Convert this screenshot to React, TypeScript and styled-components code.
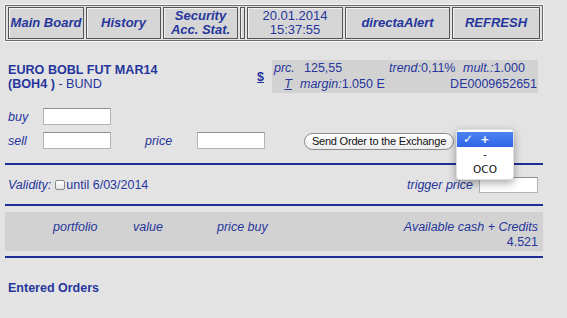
import React from 'react'
import styled, { createGlobalStyle } from 'styled-components'

// Colours taken from the trading screen.
const ink = '#26369c'
const rule = '#1f2e96'
const panel = '#d2d2d2'

const GlobalStyle = createGlobalStyle`
    *, *::before, *::after { box-sizing: border-box; }
    html, body {
        margin: 0;
        background: #e3e3e3;
    }
    body {
        font-family: 'Liberation Sans', Arial, sans-serif;
        font-size: 12.5px;
        color: ${ink};
    }
`

const Page = styled.div`
    width: 538px;
    margin-left: 5px;
    padding-top: 5px;
`

// Top navigation, an old html table with cellspacing.
const NavBar = styled.div`
    display: flex;
    gap: 2px;
    height: 36px;
    padding: 1px 2px;
    border: 1px solid #6a6a6a;
    box-shadow: 0 0 0 1px #f6f6f6;
`

const NavCell = styled.div<{ $w: number; $plain?: boolean }>`
    width: ${(p) => p.$w}px;
    height: 32px;
    display: flex;
    align-items: center;
    justify-content: center;
    text-align: center;
    background: #d6d6d6;
    border: 1px solid #555;
    box-shadow: inset 1px 1px 0 #f2f2f2;
    font-size: 13px;
    line-height: 14px;
    font-weight: ${(p) => (p.$plain ? 'normal' : 'bold')};
    font-style: ${(p) => (p.$plain ? 'normal' : 'italic')};
`

// Instrument header.
const Instrument = styled.div`
    display: flex;
    align-items: center;
    margin-top: 19px;
`

const Title = styled.div`
    flex: 1;
    align-self: flex-start;
    padding: 3px 0 0 3px;
    font-size: 12.6px;
    line-height: 14px;
    font-weight: bold;
`

const Plain = styled.span`
    font-weight: normal;
`

const Dollar = styled.a`
    font-weight: bold;
    text-decoration: underline;
    color: ${ink};
    margin-right: 8px;
`

const InfoBox = styled.div`
    width: 266px;
    height: 33px;
    margin-right: 5px;
    padding: 1px 0;
    background: ${panel};
    display: grid;
    grid-template-columns: 28px 88px 73px 77px;
    grid-auto-rows: 15px;
    row-gap: 1px;
    align-items: center;
    line-height: 15px;
    white-space: nowrap;
`

const Info = styled.div<{ $pad?: number; $right?: boolean; $span?: number }>`
    padding-left: ${(p) => p.$pad ?? 0}px;
    padding-right: ${(p) => (p.$right ? 1 : 0)}px;
    text-align: ${(p) => (p.$right ? 'right' : 'left')};
    grid-column: ${(p) => (p.$span ? `span ${p.$span}` : 'auto')};
`

const Em = styled.i``

const TLink = styled.i`
    text-decoration: underline;
    padding-right: 7px;
`

// Order form.
const Form = styled.div`
    margin-top: 15px;
    display: flex;
    flex-direction: column;
    gap: 7px;
`

const FormRow = styled.div`
    display: flex;
    align-items: center;
    height: 17px;
`

const Label = styled.i<{ $w: number; $indent?: number; $gap?: number }>`
    width: ${(p) => p.$w}px;
    padding-left: ${(p) => p.$indent ?? 0}px;
    margin-left: ${(p) => p.$gap ?? 0}px;
`

const TextBox = styled.div<{ $w?: number; $h?: number }>`
    width: ${(p) => p.$w ?? 68}px;
    height: ${(p) => p.$h ?? 17}px;
    background: #fff;
    border: 1px solid #b4b4b4;
    border-top-color: #8e8e8e;
`

const SendButton = styled.div`
    margin: 2px 0 0 39px;
    width: 150px;
    height: 17px;
    border: 1px solid #8a8a8a;
    border-radius: 9px;
    background: linear-gradient(#ffffff, #ececec);
    color: #111;
    font-size: 11px;
    letter-spacing: -0.2px;
    line-height: 15px;
    text-align: center;
`

const SelectWrap = styled.div`
    position: relative;
    margin-left: 2px;
    width: 58px;
    height: 17px;
`

const Popup = styled.div`
    position: absolute;
    left: 0;
    top: -3px;
    width: 58px;
    padding: 2px 0;
    background: #fff;
    border-radius: 4px;
    border: 1px solid rgba(0, 0, 0, 0.12);
    box-shadow: 0 3px 9px rgba(0, 0, 0, 0.35);
    z-index: 2;
`

const Option = styled.div<{ $active?: boolean }>`
    position: relative;
    height: 15px;
    line-height: 15px;
    text-align: center;
    font-family: 'DejaVu Sans', sans-serif;
    font-size: 10.5px;
    color: ${(p) => (p.$active ? '#fff' : '#111')};
    font-weight: ${(p) => (p.$active ? 'bold' : 'normal')};
    background: ${(p) => (p.$active ? 'linear-gradient(#4d84f2, #2d63e6)' : 'transparent')};
`

const Check = styled.span`
    position: absolute;
    left: 6px;
    top: 0;
    font-size: 12px;
`

const Rule = styled.div<{ $top: number }>`
    height: 2px;
    background: ${rule};
    margin-top: ${(p) => p.$top}px;
`

const ValidityRow = styled.div`
    display: flex;
    align-items: center;
    padding: 12px 5px 11px 3px;
    height: 39px;
`

const CheckBox = styled.span`
    display: inline-block;
    width: 10px;
    height: 10px;
    margin: 0 1px 0 4px;
    border: 1px solid #8a8a8a;
    border-radius: 2px;
    background: linear-gradient(#ffffff, #e4e4e4);
`

const Spacer = styled.div`
    flex: 1;
`

const TriggerLabel = styled.i`
    margin-right: 6px;
`

// Portfolio summary.
const Summary = styled.div`
    margin-top: 6px;
    height: 39px;
    padding: 8px 5px 2px 0;
    background: ${panel};
    display: grid;
    grid-template-columns: 48px 80px 84px 1fr auto;
    grid-auto-rows: 14px;
    row-gap: 1px;
    line-height: 14px;
    white-space: nowrap;
`

const Head = styled.i<{ $col: number }>`
    grid-column: ${(p) => p.$col};
    grid-row: 1;
`

const Cash = styled.div`
    grid-column: 5;
    grid-row: 2;
    text-align: right;
`

const Section = styled.div`
    margin-top: 23px;
    padding-left: 3px;
    font-weight: bold;
    line-height: 14px;
`

export default function App() {
    return (
        <Page>
            <GlobalStyle />
            <NavBar>
                <NavCell $w={76}>Main Board</NavCell>
                <NavCell $w={75}>History</NavCell>
                <NavCell $w={75}>
                    Security
                    <br />
                    Acc. Stat.
                </NavCell>
                <NavCell $w={5} />
                <NavCell $w={96} $plain>
                    20.01.2014
                    <br />
                    15:37:55
                </NavCell>
                <NavCell $w={105}>directaAlert</NavCell>
                <NavCell $w={88}>REFRESH</NavCell>
            </NavBar>

            <Instrument>
                <Title>
                    EURO BOBL FUT MAR14
                    <br />
                    (BOH4 ) <Plain>- BUND</Plain>
                </Title>
                <Dollar>$</Dollar>
                <InfoBox>
                    <Info $pad={2}>
                        <Em>prc.</Em>
                    </Info>
                    <Info $pad={4}>125,55</Info>
                    <Info $pad={1}>
                        <Em>trend:</Em>0,11%
                    </Info>
                    <Info $pad={2}>
                        <Em>mult.:</Em>1.000
                    </Info>
                    <Info $right>
                        <TLink>T</TLink>
                    </Info>
                    <Info>
                        <Em>margin:</Em>1.050 E
                    </Info>
                    <Info $span={2} $right>
                        DE0009652651
                    </Info>
                </InfoBox>
            </Instrument>

            <Form>
                <FormRow>
                    <Label $w={38} $indent={3}>buy</Label>
                    <TextBox />
                </FormRow>
                <FormRow>
                    <Label $w={38} $indent={3}>sell</Label>
                    <TextBox />
                    <Label $w={52} $gap={34}>price</Label>
                    <TextBox />
                    <SendButton>Send Order to the Exchange</SendButton>
                    <SelectWrap>
                        <Popup>
                            <Option $active>
                                <Check>✓</Check>+
                            </Option>
                            <Option>-</Option>
                            <Option>OCO</Option>
                        </Popup>
                    </SelectWrap>
                </FormRow>
            </Form>

            <Rule $top={14} />
            <ValidityRow>
                <Em>Validity:</Em>
                <CheckBox />
                <span>until 6/03/2014</span>
                <Spacer />
                <TriggerLabel>trigger price</TriggerLabel>
                <TextBox $w={59} $h={16} />
            </ValidityRow>
            <Rule $top={0} />

            <Summary>
                <Head $col={2}>portfolio</Head>
                <Head $col={3}>value</Head>
                <Head $col={4}>price buy</Head>
                <Head $col={5}>Available cash + Credits</Head>
                <Cash>4.521</Cash>
            </Summary>
            <Rule $top={5} />

            <Section>Entered Orders</Section>
        </Page>
    )
}
